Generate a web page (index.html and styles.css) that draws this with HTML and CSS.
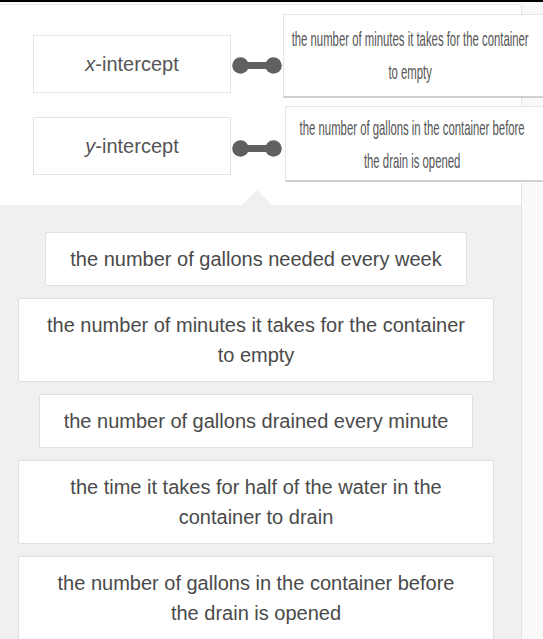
FILE: index.html
```html
<!DOCTYPE html>
<html lang="en">
<head>
<meta charset="utf-8">
<title>Match intercepts</title>
<link rel="stylesheet" href="styles.css">
</head>
<body>
<div class="topbar"></div>
<div class="panel">
  <div class="match">
    <div class="row row-a">
      <div class="source"><span><i>x</i>-intercept</span></div>
      <svg class="link" width="50" height="17" viewBox="0 0 50 17" aria-hidden="true">
        <circle cx="8.5" cy="8.5" r="8.3" fill="#606060"/>
        <rect x="8" y="5" width="34" height="7" fill="#606060"/>
        <circle cx="41.5" cy="8.5" r="8.3" fill="#606060"/>
      </svg>
      <div class="target"><div class="target-text">the number of minutes it takes for the container to empty</div></div>
    </div>
    <div class="row row-b">
      <div class="source"><span><i>y</i>-intercept</span></div>
      <svg class="link" width="50" height="17" viewBox="0 0 50 17" aria-hidden="true">
        <circle cx="8.5" cy="8.5" r="8.3" fill="#606060"/>
        <rect x="8" y="5" width="34" height="7" fill="#606060"/>
        <circle cx="41.5" cy="8.5" r="8.3" fill="#606060"/>
      </svg>
      <div class="target"><div class="target-text">the number of gallons in the container before the drain is opened</div></div>
    </div>
  </div>
  <div class="tray">
    <div class="choice">the number of gallons needed every week</div>
    <div class="choice">the number of minutes it takes for the container to empty</div>
    <div class="choice">the number of gallons drained every minute</div>
    <div class="choice">the time it takes for half of the water in the container to drain</div>
    <div class="choice">the number of gallons in the container before the drain is opened</div>
  </div>
</div>
</body>
</html>
```
FILE: styles.css
```css
html, body {
  margin: 0;
  padding: 0;
  overflow: hidden;
}
body {
  background: #f9f9f9;
  font-family: "Liberation Sans", Arial, sans-serif;
  color: #555;
  height: 639px;
}
.topbar {
  height: 2px;
  background: #000;
}
.panel {
  width: 521px;
  margin-top: 2px;
  border-top: 1px solid #ececec;
  border-right: 1px solid #e2e2e2;
  background: #fff;
}
.match {
  height: 200px;
  box-sizing: border-box;
  padding-top: 9px;
  display: flex;
  flex-direction: column;
  gap: 8px;
}
.row {
  display: flex;
  align-items: flex-start;
}
.source {
  flex: none;
  margin-left: 33px;
  width: 198px;
  height: 58px;
  box-sizing: border-box;
  border: 1px solid #e4e4e4;
  background: #fff;
  display: flex;
  align-items: center;
  justify-content: center;
  font-size: 20px;
  color: #555;
}
.source i {
  font-style: italic;
}
.link {
  display: block;
  margin-left: 1px;
  flex: none;
}
.target {
  margin-left: 1px;
  width: 280px;
  flex: none;
  box-sizing: border-box;
  background: #fff;
  border-top: 1px solid #e6e6e6;
  border-left: 1px solid #e6e6e6;
  border-bottom: 2px solid #d0d0d0;
  overflow: hidden;
}
.target-text {
  width: 445px;
  margin-left: 6px;
  transform: scaleX(0.54);
  transform-origin: left center;
  text-align: center;
  font-size: 21px;
  line-height: 33px;
  color: #555;
}
.row-a .source { margin-top: 21px; }
.row-a .link { margin-top: 43px; }
.row-a .target { height: 84px; padding-top: 7px; }
.row-b .source { margin-top: 11px; }
.row-b .link { margin-top: 34px; }
.row-b .target { height: 76px; padding-top: 4px; margin-left: 3px; }
.tray {
  position: relative;
  background: #f0f0f0;
  padding: 27px 27px 20px 18px;
  display: flex;
  flex-direction: column;
  align-items: center;
  gap: 12px;
}
.tray::before {
  content: "";
  position: absolute;
  top: -15px;
  left: 242px;
  border-left: 15px solid transparent;
  border-right: 15px solid transparent;
  border-bottom: 15px solid #f0f0f0;
}
.choice {
  max-width: 476px;
  box-sizing: border-box;
  background: #fff;
  border: 1px solid #e0e0e0;
  border-radius: 2px;
  padding: 11px 24px;
  font-size: 20px;
  line-height: 30px;
  text-align: center;
  color: #4a4a4a;
}
```
